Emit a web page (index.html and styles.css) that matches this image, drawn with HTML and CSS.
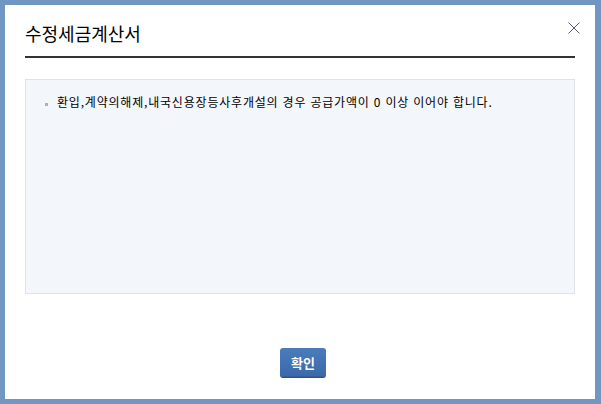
FILE: index.html
```html
<!DOCTYPE html>
<html lang="ko">
<head>
<meta charset="utf-8">
<link rel="stylesheet" href="styles.css">
</head>
<body>
<div class="panel">
  <div class="header">
    <h1 class="title">수정세금계산서</h1>
  </div>
  <button class="close" aria-label="닫기">
    <svg width="12" height="12" viewBox="0 0 12 12"><path d="M0.5 0.5L11.5 11.5M11.5 0.5L0.5 11.5" stroke="#4f5870" stroke-width="1" fill="none"/></svg>
  </button>
  <div class="content">
    <ul class="msgs">
      <li class="msg">환입,계약의해제,내국신용장등사후개설의 경우 공급가액이 0 이상 이어야 합니다.</li>
    </ul>
  </div>
  <div class="actions">
    <button class="ok">확인</button>
  </div>
</div>
</body>
</html>
```
FILE: styles.css
```css
html, body {
  margin: 0;
  padding: 0;
}
body {
  background: #7196c2;
  padding: 5px 6px 5px 5px;
  width: 601px;
  height: 404px;
  box-sizing: border-box;
  font-family: "Noto Sans CJK KR", "Noto Sans", sans-serif;
}
.panel {
  position: relative;
  background: #fff;
  height: 394px;
  padding: 0 20px;
  box-sizing: border-box;
}
.header {
  border-bottom: 2px solid #333;
  display: flex;
  align-items: center;
  padding-top: 4px;
  height: 47px;
}
.title {
  margin: 0;
  font-size: 18px;
  font-weight: 400;
  color: #000;
  line-height: 20px;
}
.close {
  position: absolute;
  top: 17px;
  right: 15px;
  width: 12px;
  height: 12px;
  padding: 0;
  border: 0;
  background: none;
  display: block;
}
.close svg { display: block; }
.content {
  margin-top: 21px;
  height: 215px;
  box-sizing: border-box;
  background: #f3f6fb;
  border: 1px solid #dde3ea;
  padding: 14px 0 0 19px;
}
.msgs {
  list-style: none;
  margin: 0;
  padding: 0;
}
.msg {
  position: relative;
  padding-left: 12px;
  font-size: 12px;
  line-height: 16px;
  color: #000;
  letter-spacing: 0.8px;
}
.msg::before {
  content: "";
  position: absolute;
  left: 0;
  top: 9px;
  width: 3px;
  height: 3px;
  background: #b0b0b0;
}
.actions {
  display: flex;
  justify-content: center;
  padding-left: 6px;
  margin-top: 54px;
}
.ok {
  width: 46px;
  height: 29px;
  border: 0;
  border-radius: 3px;
  background: linear-gradient(#4b7cba, #3a69a9);
  box-shadow: 0 1px 0 #2c5384, inset 0 -1px 0 #345f99;
  color: #fff;
  font-family: "Noto Sans CJK KR", sans-serif;
  font-weight: 700;
  font-size: 13px;
  padding: 0;
  line-height: 28px;
}
```
